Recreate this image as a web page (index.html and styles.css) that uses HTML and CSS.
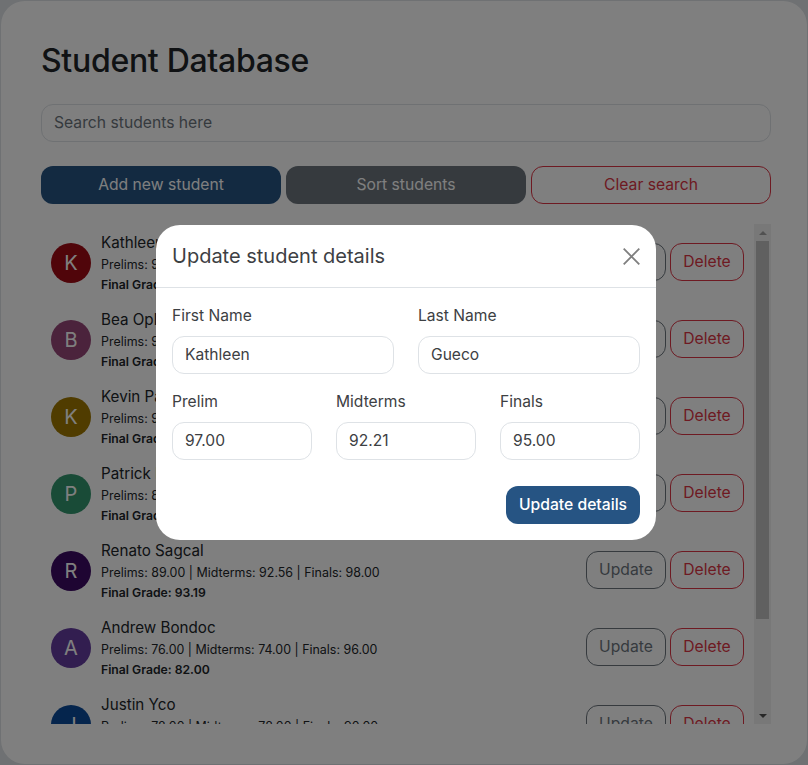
FILE: index.html
```html
<!DOCTYPE html>
<html lang="en">
<head>
    <meta charset="UTF-8">
    <meta name="viewport" content="width=device-width, initial-scale=1.0">
    <title>Student Database</title>
    <link rel="stylesheet" href="styles.css">
</head>
<body>
    <div class="card">
        <h1 class="title">Student Database</h1>
        <input type="text" class="search" placeholder="Search students here">
        <div class="actions">
            <button class="btn btn-blue">Add new student</button>
            <button class="btn btn-gray">Sort students</button>
            <button class="btn btn-red">Clear search</button>
        </div>
        <div class="list-wrap">
            <ul class="list">
                <li class="item">
                    <div class="avatar a1">K</div>
                    <div class="info">
                        <div class="name">Kathleen Gueco</div>
                        <div class="grades">Prelims: 97.00 | Midterms: 92.21 | Finals: 95.00</div>
                        <div class="final">Final Grade: 94.74</div>
                    </div>
                    <button class="btn-sm btn-update">Update</button>
                    <button class="btn-sm btn-delete">Delete</button>
                </li>
                <li class="item">
                    <div class="avatar a2">B</div>
                    <div class="info">
                        <div class="name">Bea Oplas</div>
                        <div class="grades">Prelims: 90.00 | Midterms: 91.00 | Finals: 92.00</div>
                        <div class="final">Final Grade: 91.00</div>
                    </div>
                    <button class="btn-sm btn-update">Update</button>
                    <button class="btn-sm btn-delete">Delete</button>
                </li>
                <li class="item">
                    <div class="avatar a3">K</div>
                    <div class="info">
                        <div class="name">Kevin Pascual</div>
                        <div class="grades">Prelims: 92.00 | Midterms: 88.00 | Finals: 90.00</div>
                        <div class="final">Final Grade: 90.00</div>
                    </div>
                    <button class="btn-sm btn-update">Update</button>
                    <button class="btn-sm btn-delete">Delete</button>
                </li>
                <li class="item">
                    <div class="avatar a4">P</div>
                    <div class="info">
                        <div class="name">Patrick Reyes</div>
                        <div class="grades">Prelims: 85.00 | Midterms: 87.00 | Finals: 89.00</div>
                        <div class="final">Final Grade: 87.00</div>
                    </div>
                    <button class="btn-sm btn-update">Update</button>
                    <button class="btn-sm btn-delete">Delete</button>
                </li>
                <li class="item">
                    <div class="avatar a5">R</div>
                    <div class="info">
                        <div class="name">Renato Sagcal</div>
                        <div class="grades">Prelims: 89.00 | Midterms: 92.56 | Finals: 98.00</div>
                        <div class="final">Final Grade: 93.19</div>
                    </div>
                    <button class="btn-sm btn-update">Update</button>
                    <button class="btn-sm btn-delete">Delete</button>
                </li>
                <li class="item">
                    <div class="avatar a6">A</div>
                    <div class="info">
                        <div class="name">Andrew Bondoc</div>
                        <div class="grades">Prelims: 76.00 | Midterms: 74.00 | Finals: 96.00</div>
                        <div class="final">Final Grade: 82.00</div>
                    </div>
                    <button class="btn-sm btn-update">Update</button>
                    <button class="btn-sm btn-delete">Delete</button>
                </li>
                <li class="item">
                    <div class="avatar a7">J</div>
                    <div class="info">
                        <div class="name">Justin Yco</div>
                        <div class="grades">Prelims: 78.00 | Midterms: 78.00 | Finals: 90.00</div>
                        <div class="final">Final Grade: 82.00</div>
                    </div>
                    <button class="btn-sm btn-update">Update</button>
                    <button class="btn-sm btn-delete">Delete</button>
                </li>
            </ul>
            <div class="scrollbar">
                <div class="arrow arrow-up"></div>
                <div class="track"><div class="thumb"></div></div>
                <div class="arrow arrow-down"></div>
            </div>
        </div>
    </div>

    <div class="backdrop"></div>

    <div class="modal">
        <div class="modal-header">
            <span class="modal-title">Update student details</span>
            <svg class="close" width="17" height="17" viewBox="0 0 17 17">
                <path d="M0.7 0.7L16.3 16.3M16.3 0.7L0.7 16.3" stroke="#7f7f7f" stroke-width="1.8" fill="none"/>
            </svg>
        </div>
        <div class="modal-body">
            <div class="row">
                <label class="field">First Name<input type="text" value="Kathleen"></label>
                <label class="field">Last Name<input type="text" value="Gueco"></label>
            </div>
            <div class="row">
                <label class="field">Prelim<input type="text" value="97.00"></label>
                <label class="field">Midterms<input type="text" value="92.21"></label>
                <label class="field">Finals<input type="text" value="95.00"></label>
            </div>
            <div class="modal-footer">
                <button class="btn-save">Update details</button>
            </div>
        </div>
    </div>
</body>
</html>
```

FILE: styles.css
```css
* {
    box-sizing: border-box;
}
html, body {
    height: 100%;
}
body {
    margin: 0;
    padding: 1px;
    background-color: #dee2e6;
    font-family: "Inter", "Open Sans", sans-serif;
    color: #212529;
    overflow: hidden;
}
.card {
    height: 763px;
    background-color: #fff;
    border-radius: 24px;
    padding: 40px 36px 39px 40px;
    display: flex;
    flex-direction: column;
}
.title {
    margin: 0;
    font-size: 32px;
    line-height: 40px;
    font-weight: 500;
    letter-spacing: -0.3px;
}
.search {
    height: 38px;
    margin-top: 23px;
    padding: 0 12px 2px;
    border: 1px solid #dee2e6;
    border-radius: 12px;
    font: inherit;
    font-size: 15.7px;
}
.search::placeholder {
    color: #6c757d;
    opacity: 1;
}
.actions {
    display: flex;
    gap: 5px;
    margin-top: 24px;
}
.btn {
    flex: 1;
    height: 38px;
    padding: 0 0 2px;
    border-radius: 12px;
    font: inherit;
    font-size: 15.7px;
    border: 1px solid transparent;
}
.btn-blue {
    background-color: #265483;
    color: #fff;
}
.btn-gray {
    background-color: #6c757d;
    color: #fff;
}
.btn-red {
    background-color: transparent;
    border-color: #dc3545;
    color: #dc3545;
}
.list-wrap {
    display: flex;
    height: 500px;
    margin-top: 20px;
    overflow: hidden;
}
.list {
    flex: 1;
    margin: 0;
    padding: 0 10px;
    list-style: none;
    overflow: hidden;
}
.item {
    display: flex;
    align-items: center;
    height: 77px;
    gap: 4px;
}
.avatar {
    flex: none;
    width: 40px;
    height: 40px;
    margin-right: 6px;
    border-radius: 50%;
    color: #fff;
    font-size: 20px;
    display: flex;
    align-items: center;
    justify-content: center;
}
.a1 { background-color: #a00a14; }
.a2 { background-color: #964678; }
.a3 { background-color: #a07800; }
.a4 { background-color: #32966e; }
.a5 { background-color: #3c0a64; }
.a6 { background-color: #643ca0; }
.a7 { background-color: #0a4a9a; }
.info {
    flex: 1;
    padding-top: 2px;
}
.name {
    font-size: 15.2px;
    line-height: 20px;
}
.grades {
    font-size: 12.45px;
    line-height: 20px;
    margin-top: 2px;
}
.final {
    font-size: 12.2px;
    line-height: 18px;
    margin-top: 1px;
    font-weight: 600;
}
.btn-sm {
    height: 38px;
    margin-bottom: 1px;
    padding: 0 0 2px;
    border-radius: 12px;
    background-color: transparent;
    font: inherit;
    font-size: 15.7px;
    border: 1px solid;
}
.btn-update {
    width: 80px;
    border-color: #6c757d;
    color: #6c757d;
}
.btn-delete {
    width: 74px;
    border-color: #dc3545;
    color: #dc3545;
}
.scrollbar {
    flex: none;
    width: 17px;
    display: flex;
    flex-direction: column;
    background-color: #f1f1f1;
}
.arrow {
    height: 17px;
    flex: none;
    display: flex;
    align-items: center;
    justify-content: center;
}
.arrow::before {
    content: "";
    border-left: 4px solid transparent;
    border-right: 4px solid transparent;
}
.arrow-up::before {
    border-bottom: 4px solid #a3a3a3;
}
.arrow-down::before {
    border-top: 4px solid #505050;
}
.track {
    flex: 1;
    padding: 0 2px;
}
.thumb {
    height: 378px;
    background-color: #c1c1c1;
}
.backdrop {
    position: fixed;
    inset: 0;
    background-color: rgba(0, 0, 0, 0.5);
}
.modal {
    position: fixed;
    left: 156px;
    top: 225px;
    width: 500px;
    height: 315px;
    background-color: #fff;
    border-radius: 24px;
    color: #3d4043;
}
.modal-header {
    display: flex;
    align-items: center;
    justify-content: space-between;
    height: 63px;
    padding: 0 16px;
    border-bottom: 1px solid #dee2e6;
}
.modal-title {
    font-size: 20px;
}
.modal-body {
    padding: 16px 16px 0;
}
.row {
    display: flex;
    gap: 24px;
    margin-bottom: 16px;
}
.field {
    flex: 1;
    min-width: 0;
    font-size: 15.6px;
    line-height: 24px;
}
.field input {
    display: block;
    width: 100%;
    height: 38px;
    margin-top: 8px;
    padding: 0 12px 2px;
    border: 1px solid #dee2e6;
    border-radius: 12px;
    font: inherit;
    color: #3d4043;
}
.modal-footer {
    display: flex;
    justify-content: flex-end;
    margin-top: 26px;
}
.btn-save {
    width: 134px;
    height: 38px;
    padding: 0 0 2px;
    border: none;
    border-radius: 12px;
    background-color: #265483;
    color: #fff;
    font: inherit;
    font-size: 15.7px;
    font-weight: 500;
}
```
